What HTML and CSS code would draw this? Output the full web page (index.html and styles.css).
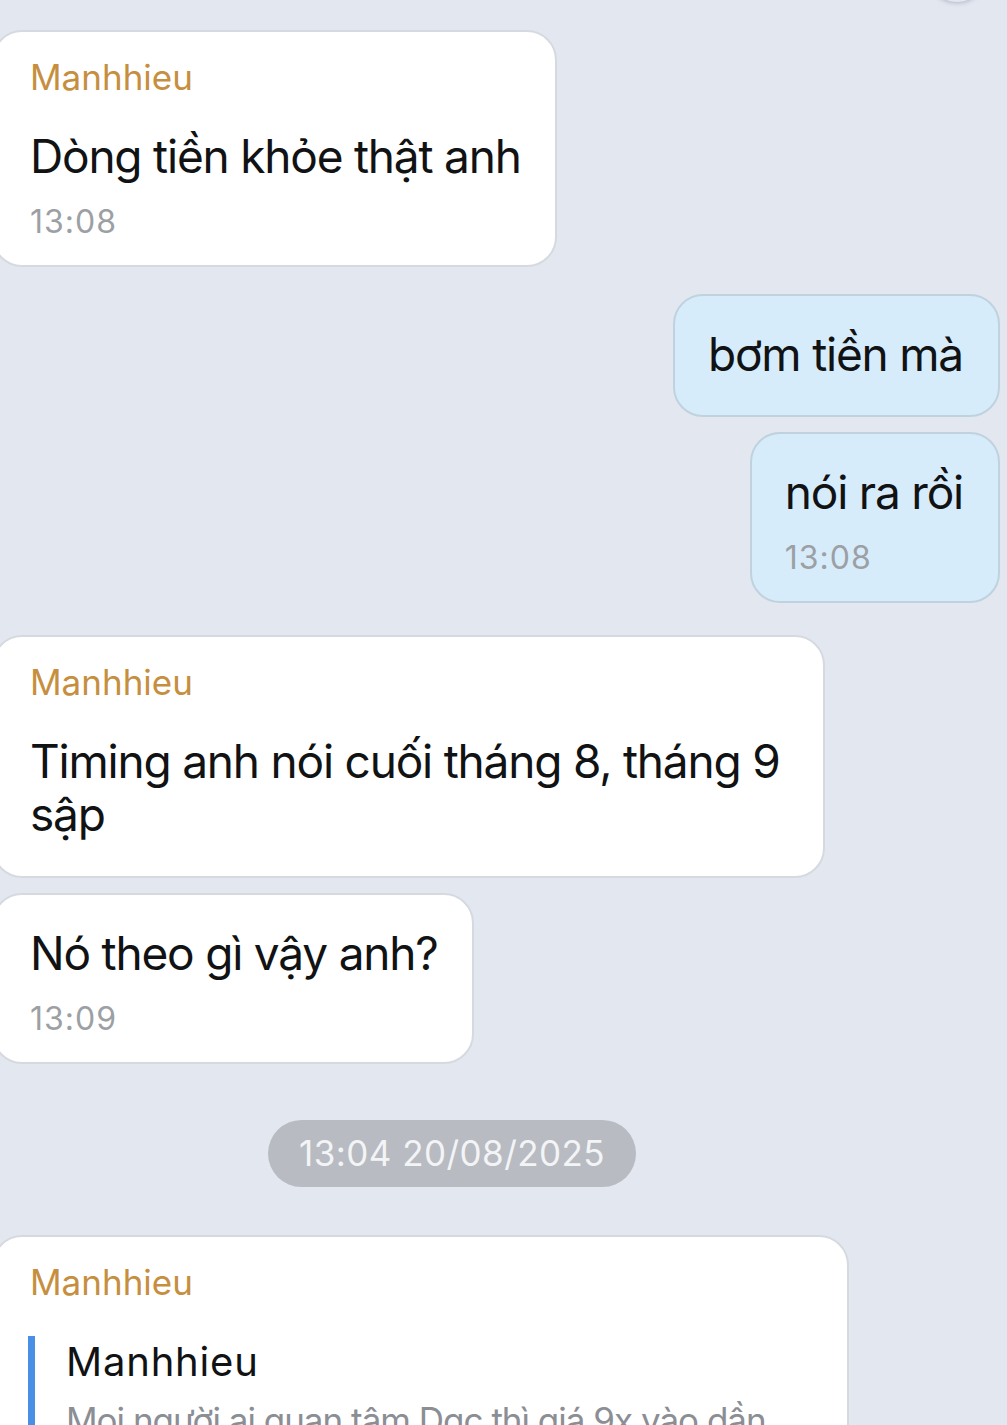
FILE: index.html
```html
<!DOCTYPE html>
<html lang="vi">
<head>
<meta charset="utf-8">
<title>Chat</title>
<link rel="stylesheet" href="styles.css">
</head>
<body>
<div class="fab-shadow"></div>
<main class="chat">
  <div class="bubble in first">
    <div class="name">Manhhieu</div>
    <div class="msg">Dòng tiền khỏe thật anh</div>
    <div class="time">13:08</div>
  </div>

  <div class="bubble out gap-lg">
    <div class="msg">bơm tiền mà</div>
  </div>
  <div class="bubble out gap-sm">
    <div class="msg">nói ra rồi</div>
    <div class="time">13:08</div>
  </div>

  <div class="bubble in gap-lg wide">
    <div class="name">Manhhieu</div>
    <div class="msg">Timing anh nói cuối tháng 8, tháng 9 sập</div>
  </div>
  <div class="bubble in gap-sm">
    <div class="msg">Nó theo gì vậy anh?</div>
    <div class="time">13:09</div>
  </div>

  <div class="date-pill">13:04 20/08/2025</div>

  <div class="bubble in quoted">
    <div class="name">Manhhieu</div>
    <div class="quote">
      <div class="quote-name">Manhhieu</div>
      <div class="quote-text">Mọi người ai quan tâm Dgc thì giá 9x vào dần</div>
    </div>
  </div>
</main>
</body>
</html>
```

FILE: styles.css
```css
* { box-sizing: border-box; }

html, body {
  margin: 0;
  padding: 0;
  height: 100%;
  overflow: hidden;
  background: #e2e7f0;
}

body {
  font-family: Inter, "Noto Sans", "Liberation Sans", sans-serif;
  color: #111214;
  position: relative;
}

.fab-shadow {
  position: absolute;
  top: -60px;
  left: 926px;
  width: 62px;
  height: 62px;
  border-radius: 50%;
  background: #e2e7f0;
  box-shadow: 0 1px 4px rgba(90, 95, 110, 0.35);
}

.chat {
  display: flex;
  flex-direction: column;
  padding-top: 30px;
}

.bubble {
  border: 2px solid #d6dae0;
  border-radius: 30px;
  background: #ffffff;
  padding: 24px 34px 23px 36px;
  max-width: 857px;
}

.bubble.in {
  align-self: flex-start;
  margin-left: -8px;
}

.bubble.out {
  align-self: flex-end;
  margin-right: 7px;
  background: #d7ecfa;
  border-color: #bfd2de;
  padding-left: 33px;
  padding-right: 35px;
}

.bubble.wide { width: 833px; }

.gap-lg { margin-top: 27px; }
.gap-sm { margin-top: 15px; }
.bubble.in.gap-lg { margin-top: 32px; }

.name {
  font-size: 35px;
  line-height: 42px;
  color: #c68f3f;
}

.msg {
  font-size: 46px;
  line-height: 53px;
  letter-spacing: -1.2px;
}

.name + .msg { margin-top: 32px; }
.msg:first-child { margin-top: 8px; }
.msg:last-child { margin-bottom: 11px; }
.bubble.wide .msg:last-child { margin-bottom: 12px; }

.time {
  margin-top: 19px;
  font-size: 32px;
  line-height: 40px;
  letter-spacing: 1px;
  color: #9c9fa4;
}

.date-pill {
  align-self: flex-start;
  margin: 56px 0 0 268px;
  height: 67px;
  padding: 0 31px;
  border-radius: 34px;
  background: #b8bbc1;
  color: #f3f4f6;
  font-size: 35px;
  line-height: 67px;
  letter-spacing: 0.45px;
}

.bubble.quoted {
  margin-top: 48px;
  width: 857px;
}

.quote {
  margin-top: 33px;
  margin-left: -2px;
  border-left: 7px solid #4a8fe6;
  padding: 2px 0 0 31px;
}

.quote-name {
  font-size: 40px;
  line-height: 48px;
  letter-spacing: 0.8px;
  color: #111214;
}

.quote-text {
  margin-top: 10px;
  font-size: 35px;
  line-height: 48px;
  letter-spacing: -1px;
  color: #8b8e94;
  white-space: nowrap;
}
```
